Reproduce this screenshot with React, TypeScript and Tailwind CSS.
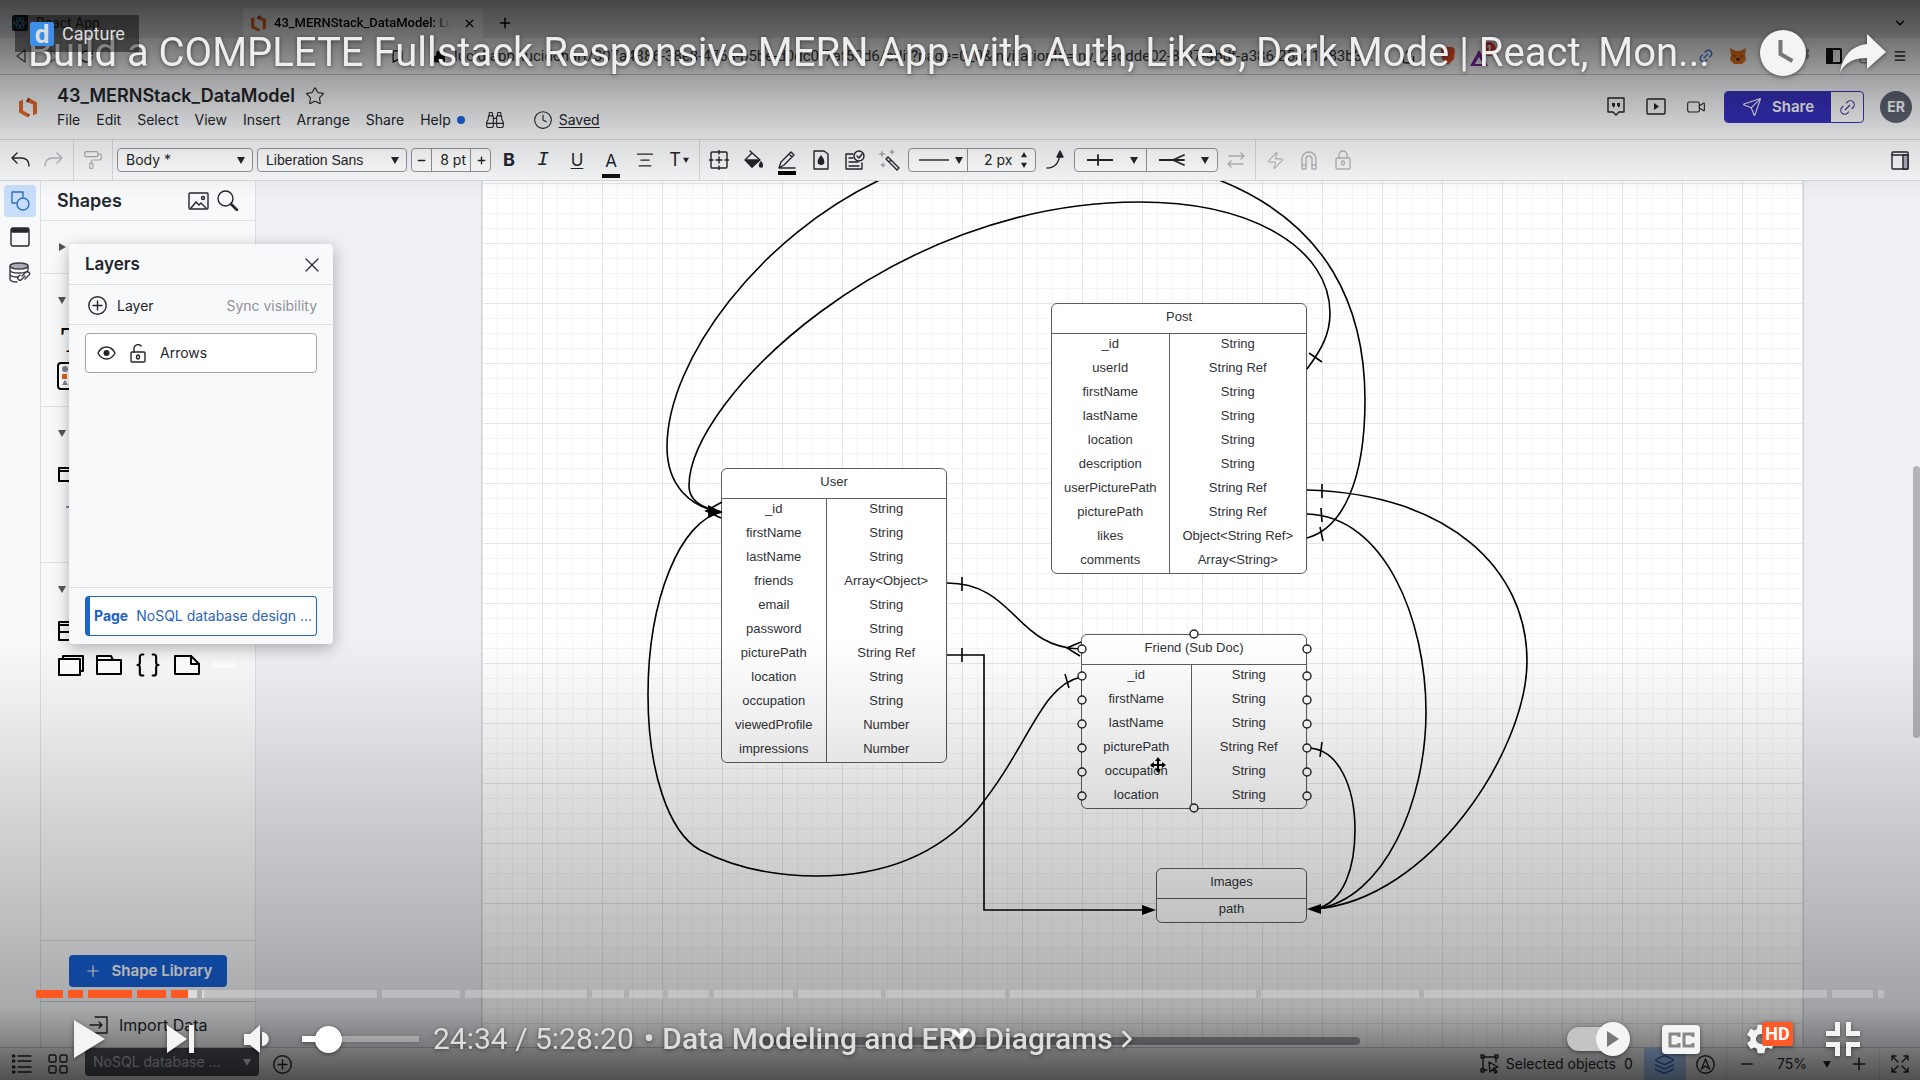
import React from "react";
import {
  Star, Binoculars, Clock, Video, Send, Link2, Bookmark, Lock, RotateCw, X, Plus, Minus,
  ChevronDown, ChevronRight, Search, PaintRoller, Magnet, Zap, Layers, Menu, Puzzle, Wallet,
  Share, LockOpen, Braces, AlignCenter,
} from "lucide-react";

/* ---------- helpers ---------- */

function Svg({ w = 20, h = 20, box, className = "", children, sw = 1.4 }: {
  w?: number; h?: number; box?: string; className?: string; children: React.ReactNode; sw?: number;
}) {
  return (
    <svg width={w} height={h} viewBox={box ?? `0 0 ${w} ${h}`} fill="none" stroke="currentColor" strokeWidth={sw}
      strokeLinecap="round" strokeLinejoin="round" className={`shrink-0 ${className}`} aria-hidden="true">
      {children}
    </svg>
  );
}

function Caret({ className = "" }: { className?: string }) {
  return (
    <svg width="8" height="8" viewBox="0 0 8 8" className={`shrink-0 ${className}`} aria-hidden="true">
      <path d="M0 1h8L4 8z" fill="currentColor" />
    </svg>
  );
}

function IconBtn({ label, className = "", children }: { label: string; className?: string; children: React.ReactNode }) {
  return (
    <button type="button" aria-label={label} className={`flex shrink-0 items-center justify-center ${className}`}>
      {children}
    </button>
  );
}

function LucidMark({ w, h }: { w: number; h: number }) {
  return (
    <svg width={w} height={h} viewBox="0 0 18 20" className="shrink-0" aria-hidden="true">
      <path d="M0 4l4-2v11l5 3v4l-9-5z" fill="#e8692c" />
      <path d="M9 0l9 5v11l-4 2V7L7 4z" fill="#e8692c" />
      <path d="M7 4l3-4 1 2-2 3z M9 16l2 1-2 3z" fill="#9c3d12" />
    </svg>
  );
}

/* ---------- browser chrome ---------- */

function BrowserChrome() {
  return (
    <div className="shrink-0">
      <div className="flex h-[38px] items-end bg-[#dee1e6]">
        <div className="flex h-[30px] w-[243px] items-center gap-2 pl-3 text-sm text-[#333]">
          <span className="flex size-4 items-center justify-center rounded-xs bg-[#20232a]">
            <Svg w={14} h={14} sw={0.9} className="text-[#61dafb]">
              <ellipse cx="7" cy="7" rx="6" ry="2.4" />
              <ellipse cx="7" cy="7" rx="6" ry="2.4" transform="rotate(60 7 7)" />
              <ellipse cx="7" cy="7" rx="6" ry="2.4" transform="rotate(120 7 7)" />
            </Svg>
          </span>
          <span className="font-['Roboto']">React App</span>
        </div>
        <div className="flex h-[30px] w-[240px] items-center gap-2 rounded-t bg-[#f6f7f8] pr-1 pl-2">
          <LucidMark w={15} h={17} />
          <span className="flex-1 overflow-hidden mask-r-from-90% font-['Roboto'] text-[13px] font-medium whitespace-nowrap text-black">43_MERNStack_DataModel: Luc</span>
          <IconBtn label="Close tab" className="size-5"><X size={13} strokeWidth={2.2} /></IconBtn>
        </div>
        <IconBtn label="New tab" className="h-[30px] w-11"><Plus size={16} strokeWidth={2.2} /></IconBtn>
        <IconBtn label="Tab list" className="mr-2 ml-auto h-[30px] w-6"><ChevronDown size={14} strokeWidth={2.4} /></IconBtn>
      </div>
      <div className="flex h-[37px] items-center border-b border-[#c4c6ca] bg-[#f8f8f9] text-[#111]">
        <IconBtn label="Back" className="ml-3 size-5 text-[#555]">
          <Svg w={14} h={14}><path d="M10 1v12L2 7z" /></Svg>
        </IconBtn>
        <IconBtn label="Forward" className="ml-3 size-5 text-[#999]">
          <Svg w={14} h={14}><path d="M4 1v12l8-6z" /></Svg>
        </IconBtn>
        <IconBtn label="Reload" className="ml-3 size-5"><RotateCw size={15} strokeWidth={2} /></IconBtn>
        <IconBtn label="Bookmark" className="ml-[291px] size-5"><Bookmark size={15} strokeWidth={2} /></IconBtn>
        <Lock size={13} className="ml-[26px] shrink-0" fill="currentColor" />
        <input
          aria-label="Address" readOnly
          className="ml-2 w-[936px] min-w-0 bg-transparent font-['Roboto'] text-[15px] text-[#333] outline-none"
          value="lucid.app/lucidchart/307a4386-38e8-476a-b5be-d0dc0f7af50d6/edit?page=0_0&invitationId=inv_2addde02-8f37-4bdf-a386-25a21983b3..."
        />
        <IconBtn label="Share page" className="ml-2 size-5"><Share size={15} /></IconBtn>
        <span className="ml-5 size-5 shrink-0">
          <Svg w={20} h={20} sw={0}><path d="M3 3l3-2h8l3 2-1 10-6 6-6-6z" fill="#f0502d" /></Svg>
        </span>
        <span className="relative ml-3 flex size-5 shrink-0 items-end">
          <Svg w={18} h={16} sw={0}><path d="M9 0l9 16H0z" fill="#7a2a9c" /><path d="M9 7l4 7H5z" fill="#fff" /></Svg>
          <span className="absolute -top-1 left-3 flex size-3.5 items-center justify-center rounded-full bg-[#e53b30] text-[10px] font-bold text-white">1</span>
        </span>
        <span className="ml-auto flex items-center gap-4 pr-3">
          <Link2 size={16} className="-rotate-45 text-[#2f6fe0]" />
          <svg width="16" height="16" viewBox="0 0 16 16" aria-hidden="true">
            <path d="M0 0l6 3h4l6-3-1 7 1 5-4 4H4l-4-4 1-5z" fill="#e8731c" />
            <path d="M6 10h4l-1 3H7zM3 7l3 1-2 1zM13 7l-3 1 2 1z" fill="#4a2a12" />
          </svg>
          <Puzzle size={16} className="text-[#bbb]" fill="currentColor" />
          <Puzzle size={16} className="text-[#999]" fill="currentColor" />
          <Svg w={16} h={16} sw={2}><rect x="1" y="1" width="14" height="14" rx="1" /><path d="M1 1h5v14H1z" fill="currentColor" /></Svg>
          <Wallet size={18} className="text-[#999]" />
          <IconBtn label="Browser menu" className="size-4"><Menu size={14} strokeWidth={2.4} /></IconBtn>
        </span>
      </div>
    </div>
  );
}

/* ---------- editor header ---------- */

const MENUS = ["File", "Edit", "Select", "View", "Insert", "Arrange", "Share"];

function EditorHeader() {
  return (
    <header className="flex h-16 shrink-0 items-center bg-[#f8f9fb] pr-2 text-[#23262c]">
      <div className="flex w-[57px] shrink-0 pl-[19px]"><LucidMark w={18} h={21} /></div>
      <div className="pt-0.5">
        <div className="flex h-6 items-center gap-2.5">
          <h1 className="text-lg leading-6 font-semibold whitespace-nowrap">43_MERNStack_DataModel</h1>
          <IconBtn label="Add to favourites"><Star size={20} strokeWidth={1.3} /></IconBtn>
        </div>
        <nav className="flex h-6 items-center gap-4 text-sm">
          {MENUS.map((m) => <button type="button" key={m}>{m}</button>)}
          <button type="button" className="flex items-center gap-1.5">Help<span className="size-2 rounded-full bg-[#1764e0]" /></button>
          <IconBtn label="Find" className="ml-1"><Binoculars size={20} strokeWidth={1.3} /></IconBtn>
          <button type="button" className="ml-3 flex items-center gap-1.5"><Clock size={20} strokeWidth={1.3} /><span className="underline underline-offset-2">Saved</span></button>
        </nav>
      </div>
      <div className="ml-auto flex items-center">
        <IconBtn label="Comments" className="w-10">
          <Svg w={20} h={20}><path d="M2 1h16v14h-5l-3 3-3-3H2z" />
            <path d="M6 6h3v3l-2 2V9H6zM11 6h3v3l-2 2V9h-1z" fill="currentColor" stroke="none" /></Svg>
        </IconBtn>
        <IconBtn label="Present" className="w-10">
          <Svg w={20} h={18}><rect x="1" y="1" width="18" height="15" rx="1" /><path d="M8 5l5 3.500-5 3.500z" fill="currentColor" stroke="none" /></Svg>
        </IconBtn>
        <IconBtn label="Video call" className="w-10"><Video size={20} strokeWidth={1.3} /></IconBtn>
        <div className="ml-2 flex h-8 overflow-hidden rounded border border-[#3c35c4] bg-white">
          <button type="button" className="flex w-[106px] items-center justify-center gap-2.5 bg-[#3630bd] text-[15px] font-semibold text-white">
            <Send size={20} strokeWidth={1.3} />Share
          </button>
          <IconBtn label="Copy link" className="w-8 text-[#3c35a4]"><Link2 size={19} strokeWidth={1.4} className="-rotate-45" /></IconBtn>
        </div>
        <span className="ml-4 flex size-8 items-center justify-center rounded-full bg-[#5d6473] text-sm font-bold text-white">ER</span>
      </div>
    </header>
  );
}

/* ---------- toolbar ---------- */

function Cell({ label, children, dim = false }: { label: string; children: React.ReactNode; dim?: boolean }) {
  return <IconBtn label={label} className={dim ? "h-full w-[34px] text-[#b4b7bc]" : "h-full w-[34px] text-[#23262c]"}>{children}</IconBtn>;
}

function Rule() {
  return <span className="h-full w-px shrink-0 bg-[#d7dade]" />;
}

function Toolbar() {
  return (
    <div className="flex h-[42px] shrink-0 items-center border-y border-[#d5d8dc] bg-[#f8f9fb] text-sm text-[#23262c]">
      <div className="flex h-full w-[73px] pl-[3px]">
        <Cell label="Undo"><Svg w={20} h={18}><path d="M7 2L2 7l5 5M2 7h9c5 0 8 3 8 8" /></Svg></Cell>
        <Cell label="Redo" dim><Svg w={20} h={18}><path d="M13 2l5 5-5 5M18 7H9c-5 0-8 3-8 8" /></Svg></Cell>
      </div>
      <Rule />
      <div className="flex w-[38px] justify-center"><IconBtn label="Format painter" className="text-[#a9acb1]"><PaintRoller size={20} strokeWidth={1.4} /></IconBtn></div>
      <Rule />
      <div className="relative ml-1 shrink-0">
        <select aria-label="Text style" className="h-6 w-[136px] appearance-none rounded-sm border border-[#8f949c] bg-white pl-2 text-sm"><option>Body *</option></select>
        <Caret className="pointer-events-none absolute top-2 right-2" />
      </div>
      <div className="relative ml-1 shrink-0">
        <select aria-label="Font" className="h-6 w-[150px] appearance-none rounded-sm border border-[#8f949c] bg-white pl-2 font-['Liberation_Sans'] text-sm"><option>Liberation Sans</option></select>
        <Caret className="pointer-events-none absolute top-2 right-2" />
      </div>
      <div className="ml-1 flex h-6 w-20 shrink-0 items-stretch divide-x divide-[#8f949c] rounded-sm border border-[#8f949c] bg-white">
        <IconBtn label="Smaller" className="w-5"><Minus size={11} strokeWidth={3} /></IconBtn>
        <input aria-label="Font size" defaultValue="8 pt" className="w-[39px] bg-transparent pr-1 text-right text-sm outline-none" />
        <IconBtn label="Larger" className="w-5"><Plus size={11} strokeWidth={3} /></IconBtn>
      </div>
      <span className="w-px" />
      <Cell label="Bold"><b className="text-lg">B</b></Cell>
      <Cell label="Italic"><span className="font-['Liberation_Mono'] text-xl italic">I</span></Cell>
      <Cell label="Underline"><span className="text-[17px] underline underline-offset-2">U</span></Cell>
      <Cell label="Text colour"><span className="mt-1.5 border-b-4 border-[#111] px-[3px] text-[17px] leading-[26px]">A</span></Cell>
      <Cell label="Align"><AlignCenter size={20} strokeWidth={1.5} /></Cell>
      <div className="flex h-full w-[37px]"><Cell label="Text options"><span className="text-lg">T</span><Caret className="ml-0.5 w-1.5" /></Cell></div>
      <Rule />
      <div className="flex h-full w-[208px] pl-0.5">
        <Cell label="Shape"><Svg><rect x="2" y="2" width="16" height="16" rx="1" /><path d="M10 0v4M10 16v4M0 10h4M16 10h4M7 10h6M10 7v6" /></Svg></Cell>
        <Cell label="Fill">
          <Svg><path d="M7 1l10 9-8 7-7-7 7-7" /><path d="M3 10h13l-7 7z" fill="currentColor" /><path d="M18 12c2 3 2 5 0 5s-2-2 0-5z" fill="currentColor" /></Svg>
        </Cell>
        <Cell label="Line colour">
          <span className="mt-1.5 flex flex-col items-center gap-0.5 border-b-4 border-black pb-0.5"><Svg w={18} h={18}><path d="M1 17l2-6L13 1l3 3L6 14zM11 3l3 3M1 17h16" /></Svg></span>
        </Cell>
        <Cell label="Opacity"><Svg w={16} h={20}><path d="M1 1h10l4 3v15H1z" /><path d="M8 5c5 6 4 10 0 10S3 11 8 5z" fill="currentColor" stroke="none" /></Svg></Cell>
        <Cell label="Status"><Svg><path d="M8 4H1v15h16v-6M4 8h4M4 12h9M4 16h10" /><circle cx="14" cy="6" r="5" /><path d="M12 6l2 2 3-4" /></Svg></Cell>
        <Cell label="Magic format">
          <Svg w={22} h={22}><path d="M8 10l2-2 11 11-2 2zM11 13l2-2" /><g className="text-[#a9acb1]" fill="currentColor" stroke="none"><path d="M4 1l1 3 3 1-3 1-1 3-1-3-3-1 3-1zM14 0l1 2 2 1-2 1-1 2-1-2-2-1 2-1zM5 13l1 2 2 1-2 1-1 2-1-2-2-1 2-1z" /></g></Svg>
        </Cell>
      </div>
      <div className="flex h-6 w-32 shrink-0 items-stretch divide-x divide-[#8f949c] rounded-sm border border-[#8f949c] bg-white">
        <button type="button" aria-label="Line style" className="flex w-[59px] items-center justify-between pr-1 pl-2.5"><span className="h-0.5 w-[30px] bg-[#666]" /><Caret /></button>
        <button type="button" className="flex flex-1 items-center justify-between pr-2 pl-4 text-sm">2 px<span className="flex flex-col gap-1"><Caret className="h-1.5 w-1.5 rotate-180" /><Caret className="h-1.5 w-1.5" /></span></button>
      </div>
      <div className="flex h-full w-[38px] justify-center"><Cell label="Curved line"><Svg w={18} h={20}><path d="M1 18c8 0 12-5 13-14" /><path d="M14 1l-3 6h6z" fill="currentColor" /></Svg></Cell></div>
      <div className="mr-px flex h-6 w-36 shrink-0 items-stretch divide-x divide-[#8f949c] rounded-sm border border-[#8f949c] bg-white">
        <button type="button" aria-label="Line start" className="flex w-[72px] items-center justify-between pr-2 pl-3"><Svg w={26} h={12} sw={1.8}><path d="M0 6h26M11 1v10" /></Svg><Caret /></button>
        <button type="button" aria-label="Line end" className="flex flex-1 items-center justify-between pr-2 pl-3"><Svg w={26} h={12} sw={1.8}><path d="M0 6h25M25 1L14 6l11 5" /></Svg><Caret /></button>
      </div>
      <Cell label="Swap ends" dim><Svg w={18} h={16}><path d="M2 4h15M14 1l3 3-3 3M16 12H1M4 9l-3 3 3 3" /></Svg></Cell>
      <span className="w-0.5" />
      <Rule />
      <span className="w-0.5" />
      <Cell label="Actions" dim><Zap size={19} strokeWidth={1.4} /></Cell>
      <Cell label="Snap" dim><Svg w={18} h={20}><path d="M2 19V9a7 7 0 0114 0v10h-4V9a3 3 0 00-6 0v10zM2 15h4M12 15h4" /></Svg></Cell>
      <Cell label="Lock" dim><Svg w={16} h={20}><rect x="1" y="8" width="14" height="11" rx="1" /><path d="M4 8V5a4 4 0 018 0v3" /><ellipse cx="8" cy="13" rx="1.500" ry="2" /></Svg></Cell>
      <IconBtn label="Toggle panel" className="mr-[11px] ml-auto"><Svg w={18} h={19}><rect x="1" y="1" width="16" height="17" rx="1" /><path d="M1 4h16" /><path d="M12 4h5v14h-5z" fill="#a9acb8" /></Svg></IconBtn>
    </div>
  );
}

/* ---------- left side ---------- */

function Rail() {
  return (
    <div className="flex w-[41px] shrink-0 flex-col items-center border-r border-[#dcdee2] bg-[#f8f9fb] pt-1">
      <IconBtn label="Shapes" className="size-8 rounded-sm bg-[#c7dffd] text-[#2f6fc4]">
        <Svg w={20} h={20}><path d="M7 12H2V1h11v5" /><circle cx="13" cy="13" r="6" /></Svg>
      </IconBtn>
      <IconBtn label="Containers" className="mt-1 h-8 w-8 text-[#23262c]">
        <Svg w={20} h={20}><rect x="1" y="1" width="18" height="18" rx="2" /><path d="M2 2h16v3H2z" fill="currentColor" /></Svg>
      </IconBtn>
      <IconBtn label="Data" className="mt-1 size-8 text-[#3a3d43]">
        <Svg w={22} h={22}><ellipse cx="10" cy="4" rx="9" ry="3" fill="#aaadb5" /><path d="M1 4v13c0 2 3 3 7 3M19 4v4M1 8c0 4 18 4 18 0M1 12c0 2 4 3 8 3" /><path d="M13 14l4-4c2-1 5 1 3 3l-4 4M16 14l-4 4c-2 1-4-1-3-3l2-2" /></Svg>
      </IconBtn>
    </div>
  );
}

function Section({ className, open, children }: { className: string; open?: boolean; children?: React.ReactNode }) {
  return (
    <div className={`border-b border-[#dcdee2] pl-[17px] ${className}`}>
      <button type="button" aria-label="Toggle section" className="flex h-5 items-center gap-3 text-sm text-[#333]">
        <Caret className={open ? "text-[#555]" : "-rotate-90 text-[#555]"} />
        {!open && <span className="pt-1.5">Shapes In Use</span>}
      </button>
      {children}
    </div>
  );
}

function Sidebar() {
  return (
    <aside className="flex w-[215px] shrink-0 flex-col border-r border-[#dcdee2] bg-[#f8f9fb] text-[#23262c]">
      <div className="flex h-[40px] shrink-0 items-center border-b border-[#dcdee2] pr-[17px] pl-4">
        <h2 className="text-lg font-semibold">Shapes</h2>
        <IconBtn label="Images" className="ml-auto"><Svg w={21} h={18}><rect x="1" y="1" width="19" height="16" rx="1" /><circle cx="15" cy="6" r="1.500" /><path d="M3 16l5-6 3 3 2-2 5 5" /></Svg></IconBtn>
        <IconBtn label="Search shapes" className="ml-2"><Svg w={21} h={21}><circle cx="8.500" cy="8.500" r="7.500" /><path d="M14 14l6 6" strokeWidth={2.6} /></Svg></IconBtn>
      </div>
      <Section className="h-[53px] pt-4" />
      <Section className="h-[133px] pt-4" open>
        <div className="mt-3 -ml-px flex flex-col gap-1 text-black">
          <span className="pl-1 font-['Liberation_Serif'] text-4xl leading-9 font-bold">T</span>
          <Svg w={30} h={28} sw={2}><rect x="1" y="1" width="28" height="26" rx="3" fill="#fff" /><g stroke="none"><circle cx="8" cy="7" r="3" fill="#7c818c" /><path d="M5 12h5v5H5z" fill="#e05f22" /><path d="M8 18l3 5H5z" fill="#7c818c" /></g></Svg>
        </div>
      </Section>
      <Section className="h-[156px] pt-4" open>
        <div className="mt-6 flex flex-col gap-6 text-black">
          <Svg w={28} h={15} sw={2}><rect x="1" y="1" width="26" height="13" /><path d="M1 4h26" /></Svg>
          <span className="ml-2 h-0.5 w-4 bg-[#7c88a8]" />
        </div>
      </Section>
      <Section className="flex-1 pt-4" open>
        <div className="mt-[22px] text-black"><Svg w={28} h={20} sw={2}><rect x="1" y="1" width="26" height="18" /><path d="M1 4h26M1 11h26" /></Svg></div>
        <div className="mt-2.5 flex items-center gap-3 text-black">
          <Svg w={26} h={21} sw={2}><rect x="1" y="4" width="21" height="16" fill="#fff" /><path d="M5 4V1h20v15h-3" /></Svg>
          <Svg w={26} h={20} sw={2}><path d="M1 5h24v14H1zM1 5V1h14l2 4" fill="#fff" /></Svg>
          <Braces size={28} strokeWidth={1.8} />
          <Svg w={26} h={20} sw={2}><path d="M1 1h16l8 8v10H1z" fill="#fff" /><path d="M17 1v8h8" /></Svg>
          <span className="h-1.5 w-6 bg-white" />
        </div>
      </Section>
      <div className="shrink-0 border-b border-[#c8cace] px-7 py-3.5">
        <button type="button" className="flex h-8 w-full items-center justify-center gap-2.5 rounded-sm bg-[#1663dd] text-[15px] font-semibold text-white"><Plus size={18} strokeWidth={1.6} />Shape Library</button>
      </div>
      <button type="button" className="flex h-[45px] shrink-0 items-center gap-2.5 pl-12 text-base">
        <Svg w={20} h={18}><path d="M6 1h12v16H6M1 9h12M10 6l3 3-3 3" /></Svg>Import Data
      </button>
    </aside>
  );
}

function LayersPanel() {
  return (
    <section aria-label="Layers" className="absolute top-[63px] left-[69px] z-10 flex h-[400px] w-[264px] flex-col rounded bg-[#f8f9fb] text-[#23262c] shadow-[0_4px_16px_rgba(0,0,0,0.3)]">
      <div className="flex h-[41px] items-center justify-between border-b border-[#dcdee2] px-4 pt-0.5">
        <h2 className="text-[17px] font-semibold">Layers</h2>
        <IconBtn label="Close layers" className="-mr-1">
          <Svg w={18} h={18} sw={1.2}><path d="M3 3l12 12M15 3L3 15" /></Svg>
        </IconBtn>
      </div>
      <div className="flex h-10 items-center justify-between border-b border-[#dcdee2] px-4 pt-0.5 text-sm">
        <button type="button" className="flex items-center gap-2.5 pl-[3px]"><Svg w={19} h={19}><circle cx="9.500" cy="9.500" r="8.700" /><path d="M5 9.500h9M9.500 5v9" /></Svg>Layer</button>
        <button type="button" className="text-[#8f9298]">Sync visibility</button>
      </div>
      <div className="mx-4 mt-2 flex h-10 items-center rounded-sm border border-[#a0a4aa] bg-white pl-[11px] text-sm">
        <IconBtn label="Toggle visibility">
          <Svg w={19} h={14}><path d="M1 7c4-8 13-8 17 0c-4 8-13 8-17 0z" /><circle cx="9.500" cy="7" r="3" fill="currentColor" stroke="none" /></Svg>
        </IconBtn>
        <IconBtn label="Toggle lock" className="mr-3.5 ml-3.5">
          <Svg w={16} h={19}><rect x="1" y="8" width="14" height="10" rx="1" /><path d="M4 8V5a4 4 0 017-3" /><ellipse cx="8" cy="13" rx="1.500" ry="2" /></Svg>
        </IconBtn>
        Arrows
      </div>
      <div className="mt-auto border-t border-[#dcdee2] px-4 py-2">
        <button type="button" className="flex h-10 w-full items-center gap-2 rounded-sm border border-l-[5px] border-[#1f66cc] bg-white pl-1 text-sm whitespace-nowrap text-[#2a65b8]">
          <b className="text-[#1b5fc4]">Page</b>NoSQL database design ...
        </button>
      </div>
    </section>
  );
}

/* ---------- diagram ---------- */

type Entity = { name: string; x: number; y: number; w: number; split?: number; rows: [string, string?][] };

const ENTITIES: Entity[] = [
  { name: "Post", x: 569, y: 122, w: 256, split: 117, rows: [["_id", "String"], ["userId", "String Ref"], ["firstName", "String"], ["lastName", "String"], ["location", "String"], ["description", "String"], ["userPicturePath", "String Ref"], ["picturePath", "String Ref"], ["likes", "Object<String Ref>"], ["comments", "Array<String>"]] },
  { name: "User", x: 239, y: 287, w: 226, split: 104, rows: [["_id", "String"], ["firstName", "String"], ["lastName", "String"], ["friends", "Array<Object>"], ["email", "String"], ["password", "String"], ["picturePath", "String Ref"], ["location", "String"], ["occupation", "String"], ["viewedProfile", "Number"], ["impressions", "Number"]] },
  { name: "Friend (Sub Doc)", x: 599, y: 453, w: 226, split: 109, rows: [["_id", "String"], ["firstName", "String"], ["lastName", "String"], ["picturePath", "String Ref"], ["occupation", "String"], ["location", "String"]] },
  { name: "Images", x: 674, y: 687, w: 151, rows: [["path"]] },
];

function EntityTable({ e }: { e: Entity }) {
  return (
    <div className="absolute overflow-hidden rounded-md border border-[#5b5d61] bg-white" style={{ left: e.x, top: e.y, width: e.w }}>
      <table className="w-full table-fixed border-collapse text-center font-['Liberation_Sans',Arial,sans-serif] text-[13px] leading-4 text-[#303236]">
        {e.split && <colgroup><col style={{ width: e.split }} /><col /></colgroup>}
        <thead><tr><th colSpan={e.split ? 2 : 1} className="h-[29px] border-b border-[#5b5d61] pb-0.5 font-normal">{e.name}</th></tr></thead>
        <tbody>
          {e.rows.map(([a, b]) => (
            <tr key={a}>
              <td className={b ? "h-6 border-r border-[#5b5d61] pb-0.5" : "h-6 pb-0.5"}>{a}</td>
              {b && <td className="h-6 pb-0.5">{b}</td>}
            </tr>
          ))}
        </tbody>
      </table>
    </div>
  );
}

const HANDLE_ROWS = [649, 676, 700, 724, 748, 772, 796];

function Diagram() {
  return (
    <div className="relative h-full overflow-hidden border-x border-[#cfd2d8] bg-white bg-[linear-gradient(to_right,#e4e5e8_1px,transparent_1px),linear-gradient(to_bottom,#e4e5e8_1px,transparent_1px),linear-gradient(to_right,#f3f4f5_1px,transparent_1px),linear-gradient(to_bottom,#f3f4f5_1px,transparent_1px)] bg-[size:60px_60px,60px_60px,15px_15px,15px_15px] bg-[position:0_2px]">
      {ENTITIES.map((e) => <EntityTable key={e.name} e={e} />)}
      <svg className="absolute top-0 left-0" width="1321" height="866" viewBox="482 181 1321 866" fill="none" stroke="#000" strokeWidth="1.6" aria-hidden="true">
        <path d="M884 178C760 235 667 360 667 447C667 485 690 508 722 512" />
        <path d="M1214 178C1330 222 1365 310 1365 400C1365 480 1343 528 1307 538" />
        <path d="M722 512C700 508 689 500 689 486C689 400 890 202 1139 202C1255 202 1330 250 1330 313C1330 335 1321 350 1307 369" />
        <path d="M722 512C680 520 648 600 648 695C648 770 668 832 700 850C735 868 775 876 817 876C880 876 935 858 977 810C1030 745 1040 686 1081 677" />
        <path d="M947 583C1015 583 1015 648 1081 649" />
        <path d="M947 655H984V910H1146" />
        <path d="M1307 490C1450 494 1527 570 1527 661C1527 750 1430 900 1315 909" />
        <path d="M1307 514C1385 516 1426 620 1426 712C1426 800 1385 900 1315 909" />
        <path d="M1307 748C1340 748 1355 790 1355 830C1355 865 1345 903 1315 909" />
        <path d="M722 502L706 511L721 518M1081 642L1067 648L1080 656M962 577V591M962 648V662M1322 484V498M1321 508L1322 522M1320 527L1323 541M1309 353L1322 362M1322 742L1320 757M1065 674L1069 688" />
        <path d="M722 512L708 505V518ZM1156 910L1142 905V915ZM1307 909L1321 904V914Z" fill="#000" stroke="none" />
        <g fill="#fff" stroke="#222" strokeWidth="1.400">
          {HANDLE_ROWS.map((y) => <g key={y}><circle cx="1082" cy={y} r="4" /><circle cx="1307" cy={y} r="4" /></g>)}
          <circle cx="1194" cy="634" r="4" /><circle cx="1194" cy="808" r="4" />
        </g>
        <g transform="translate(1158 765)" fill="#000" stroke="#000" strokeWidth="2"><path d="M-5 0H5M0-5V5" /><path stroke="none" d="M0-8l3 4h-6zM0 8l3-4h-6zM-8 0l4-3v6zM8 0l-4-3v6z" /></g>
      </svg>
    </div>
  );
}

function Canvas() {
  return (
    <main className="relative flex-1 overflow-hidden bg-[#eef0f5] pr-[116px] pl-[225px]">
      <Diagram />
      <span className="absolute top-[285px] right-0 h-[272px] w-[7px] rounded-full bg-[#b3b5ba]" />
      <span className="absolute right-[560px] bottom-0.5 h-2 w-[600px] rounded-full bg-[#a2a4a9]" />
    </main>
  );
}

/* ---------- status bar ---------- */

function StatusBar() {
  return (
    <footer className="flex h-[33px] shrink-0 items-center border-t border-[#c4c7cc] bg-[#f0f1f3] pl-3 text-sm text-[#23262c]">
      <IconBtn label="Page list"><Svg w={20} h={20}><path d="M6 2h13M6 7h13M6 13h13M6 18h13" /><path d="M1 2h1M1 7h1M1 13h1M1 18h1" strokeWidth={3} /></Svg></IconBtn>
      <IconBtn label="Page grid" className="ml-4"><Svg w={20} h={20}><rect x="1" y="1" width="7" height="7" rx="1.500" /><rect x="12" y="1" width="7" height="7" rx="1.500" /><rect x="1" y="12" width="7" height="7" rx="1.500" /><rect x="12" y="12" width="7" height="7" rx="1.500" /></Svg></IconBtn>
      <div className="relative ml-[17px] shrink-0 self-start">
        <select aria-label="Page" className="h-7 w-[174px] appearance-none rounded-b-sm bg-[#4c5059] pl-2 text-[#c0c3c8]"><option>NoSQL database ...</option></select>
        <Caret className="pointer-events-none absolute top-2.5 right-2 text-[#d8dade]" />
      </div>
      <IconBtn label="Add page" className="ml-3.5"><Svg w={19} h={19}><circle cx="9.500" cy="9.500" r="8.700" /><path d="M5 9.500h9M9.500 5v9" /></Svg></IconBtn>
      <div className="ml-auto flex h-full items-center">
        <Svg w={20} h={20}><path d="M3 16V3h13v5M3 16h4" /><path d="M1 1h3v3H1zM15 1h3v3h-3zM1 15h3v3H1z" /><path d="M9 8l9 5-4 1 3 4-2 1-2-4-3 3z" /></Svg>
        <span className="ml-1.5">Selected objects</span><span className="ml-2 w-5">0</span>
        <IconBtn label="Layers" className="h-full w-[42px] bg-[#a9c8f5] text-[#1b5fc4]">
          <Layers size={21} strokeWidth={1.5} />
        </IconBtn>
        <IconBtn label="Accessibility" className="w-10"><Svg w={19} h={19}><circle cx="9.500" cy="9.500" r="8.700" /><path d="M9.500 4l4 10-4-3-4 3z" /></Svg></IconBtn>
        <Rule />
        <IconBtn label="Zoom out" className="w-10"><Minus size={18} strokeWidth={1.8} /></IconBtn>
        <button type="button" className="flex items-center gap-4 pl-2.5">75%<Caret /></button>
        <IconBtn label="Zoom in" className="ml-2 w-10"><Plus size={20} strokeWidth={1.8} /></IconBtn>
        <Rule />
        <IconBtn label="Full screen" className="w-10"><Svg w={18} h={18}><path d="M1 5V1h4M1 1l6 6M13 1h4v4M17 1l-6 6M1 13v4h4M1 17l6-6M17 13v4h-4M17 17l-6-6" /></Svg></IconBtn>
      </div>
    </footer>
  );
}

/* ---------- video player ---------- */

type Seg = { w: number; fill: string };
const SEGMENTS: Seg[] = [
  { w: 27, fill: "bg-[#ff5722]" }, { w: 15, fill: "bg-[#ff5722]" }, { w: 45, fill: "bg-[#ff5722]" }, { w: 29, fill: "bg-[#ff5722]" },
  { w: 26, fill: "bg-[linear-gradient(to_right,#ff5722_65%,#dcdcdc_65%)]" },
  { w: 177, fill: "bg-[linear-gradient(to_right,#dcdcdc_1%,rgba(255,255,255,0.25)_1%)]" },
  ...[78, 123, 32, 35, 41, 80, 83, 120, 248, 159, 407, 41, 6].map((w) => ({ w, fill: "bg-white/25" })),
];

function Player() {
  return (
    <div className="absolute inset-0 z-20 flex flex-col justify-between overflow-hidden font-['Roboto',sans-serif] text-[#eee]">
      <div className="pointer-events-none absolute inset-x-0 top-0 h-[200px] bg-[linear-gradient(to_bottom,rgba(0,0,0,0.69)_0%,rgba(0,0,0,0.54)_19%,rgba(0,0,0,0.36)_38%,rgba(0,0,0,0.26)_50%,rgba(0,0,0,0.12)_70%,rgba(0,0,0,0.03)_90%,transparent)]" />
      <div className="pointer-events-none absolute inset-x-0 bottom-0 h-[480px] bg-[linear-gradient(to_bottom,transparent_8%,rgba(0,0,0,0.06)_24%,rgba(0,0,0,0.145)_44%,rgba(0,0,0,0.215)_62%,rgba(0,0,0,0.32)_85%,rgba(0,0,0,0.47)_92%,rgba(0,0,0,0.67)_100%)]" />
      <div className="relative flex h-[106px] items-center pr-[34px] pl-7 drop-shadow-[0_1px_2px_rgba(0,0,0,0.5)]">
        <h1 className="flex-1 truncate text-[40px] leading-[52px]">Build a COMPLETE Fullstack Responsive MERN App with Auth, Likes, Dark Mode | React, Mon...</h1>
        <IconBtn label="Watch later" className="ml-8">
          <svg width="46" height="46" viewBox="0 0 46 46" aria-hidden="true"><circle cx="23" cy="23" r="23" fill="#f4f4f4" /><path d="M20.500 10v14l12 7" fill="none" stroke="#777" strokeWidth="4" /></svg>
        </IconBtn>
        <IconBtn label="Share video" className="ml-[34px]">
          <svg width="46" height="38" viewBox="0 0 46 38" aria-hidden="true"><path d="M27 0l19 18-19 17V24C14 24 6 28 0 38C3 22 11 12 27 10z" fill="#f4f4f4" /></svg>
        </IconBtn>
      </div>
      <div className="absolute top-[15px] left-[15px] flex h-[37px] w-[124px] items-center gap-2 bg-black/45 pl-[15px] text-lg text-[#ddd]">
        <span className="flex size-6 items-center justify-center rounded-xs bg-[#3b8fe8] text-[26px] leading-6 font-bold">d</span>Capture
      </div>

      <div className="relative">
        <div className="mx-9 flex h-2 gap-[5px]">
          {SEGMENTS.map((s, i) => <span key={i} className={`basis-0 ${s.fill}`} style={{ flexGrow: s.w }} />)}
        </div>
        <div className="flex h-[82px] items-center pr-[60px] pl-[74px] drop-shadow-[0_1px_2px_rgba(0,0,0,0.5)]">
          <IconBtn label="Play"><svg width="31" height="38" viewBox="0 0 31 38" aria-hidden="true"><path d="M0 0l31 19L0 38z" fill="#f4f4f4" /></svg></IconBtn>
          <IconBtn label="Next" className="ml-[62px]"><svg width="27" height="28" viewBox="0 0 27 28" aria-hidden="true"><path d="M0 0l20 14L0 28zM22 0h5v28h-5z" fill="#f4f4f4" /></svg></IconBtn>
          <IconBtn label="Mute" className="ml-[50px]"><svg width="25" height="28" viewBox="0 0 25 28" aria-hidden="true"><path d="M0 9h6L16 0v28L6 20H0zM18 7c9 1 9 13 0 14z" fill="#f4f4f4" /></svg></IconBtn>
          <label className="relative ml-[33px] flex h-7 w-[117px] shrink-0 items-center">
            <span className="h-1.5 w-5 bg-white" /><span className="h-1.5 flex-1 bg-white/35" />
            <span className="absolute left-[13px] size-[27px] rounded-full bg-white" />
            <input type="range" aria-label="Volume" defaultValue={22} className="absolute inset-0 opacity-0" />
          </label>
          <p className="ml-3.5 text-[30px] leading-10 whitespace-nowrap text-[#ddd]">24:34 / 5:28:20</p>
          <button type="button" className="ml-2.5 flex items-center text-[30px] leading-10 font-medium whitespace-nowrap text-[#ddd]">
            <span className="mr-2">•</span>Data Modeling and ERD Diagrams<ChevronRight size={28} strokeWidth={2.5} />
          </button>
          <label className="relative ml-auto flex h-9 w-[63px] shrink-0 items-center">
            <input type="checkbox" role="switch" aria-label="Autoplay" defaultChecked className="absolute inset-0 opacity-0" />
            <span className="h-6 w-[52px] rounded-full bg-[#c4c4c4]" />
            <span className="absolute right-0 flex size-[34px] items-center justify-center rounded-full bg-[#f4f4f4]">
              <svg width="12" height="16" viewBox="0 0 12 16" aria-hidden="true"><path d="M0 0l12 8-12 8z" fill="#777" /></svg>
            </span>
          </label>
          <IconBtn label="Captions" className="ml-8">
            <svg width="38" height="29" viewBox="0 0 38 29" aria-hidden="true"><rect width="38" height="29" rx="4" fill="#f4f4f4" /><path d="M17 12V9H8v12h9v-3M31 12V9h-9v12h9v-3" fill="none" stroke="#888" strokeWidth="3" /></svg>
          </IconBtn>
          <IconBtn label="Settings" className="relative ml-11">
            <svg width="34" height="34" viewBox="0 0 24 24" aria-hidden="true"><path fillRule="evenodd" fill="#f4f4f4" d="M19.400 13c.04-.3.060-.7.060-1s-.02-.7-.070-1l2.100-1.600c.2-.2.250-.5.120-.7l-2-3.500c-.12-.2-.37-.3-.6-.2l-2.500 1c-.5-.4-1-.7-1.600-1L14.500 2.400c-.04-.3-.25-.4-.5-.4h-4c-.25 0-.46.2-.5.400L9.100 5c-.6.25-1.100.6-1.600 1L5 5c-.2-.1-.5 0-.6.200l-2 3.500c-.1.2-.1.5.1.600L4.600 11c-.05.3-.1.700-.1 1s0 .7.100 1l-2.100 1.600c-.2.15-.25.450-.1.650l2 3.500c.1.2.35.300.6.200l2.500-1c.5.4 1 .7 1.600 1l.4 2.600c.05.250.25.450.5.450h4c.25 0 .45-.2.500-.450l.4-2.600c.6-.25 1.100-.6 1.600-1l2.500 1c.2.100.5 0 .6-.200l2-3.500c.1-.2.100-.5-.1-.650zM12 15.600a3.600 3.600 0 110-7.200 3.600 3.600 0 010 7.200z" /></svg>
            <span className="absolute top-0 left-[18px] flex h-6 w-[31px] items-center justify-center rounded-xs bg-[#ff5a2a] text-lg font-bold text-white">HD</span>
          </IconBtn>
          <IconBtn label="Exit full screen" className="ml-12">
            <svg width="34" height="34" viewBox="0 0 34 34" aria-hidden="true"><path d="M0 14h14V0H9v9H0zM20 0v14h14V9h-9V0zM0 20v5h9v9h5V20zM20 20v14h5v-9h9v-5z" fill="#f4f4f4" /></svg>
          </IconBtn>
        </div>
        <ChevronDown size={24} strokeWidth={4} className="absolute bottom-[34px] left-1/2 -translate-x-1/2 text-white" aria-hidden="true" />
      </div>
    </div>
  );
}

export default function App() {
  return (
    <div className="relative flex h-screen min-h-[720px] flex-col overflow-hidden bg-[#f8f9fb] font-['Inter',sans-serif]">
      <BrowserChrome />
      <EditorHeader />
      <Toolbar />
      <div className="relative flex min-h-0 flex-1">
        <Rail />
        <Sidebar />
        <Canvas />
        <LayersPanel />
      </div>
      <StatusBar />
      <Player />
    </div>
  );
}
